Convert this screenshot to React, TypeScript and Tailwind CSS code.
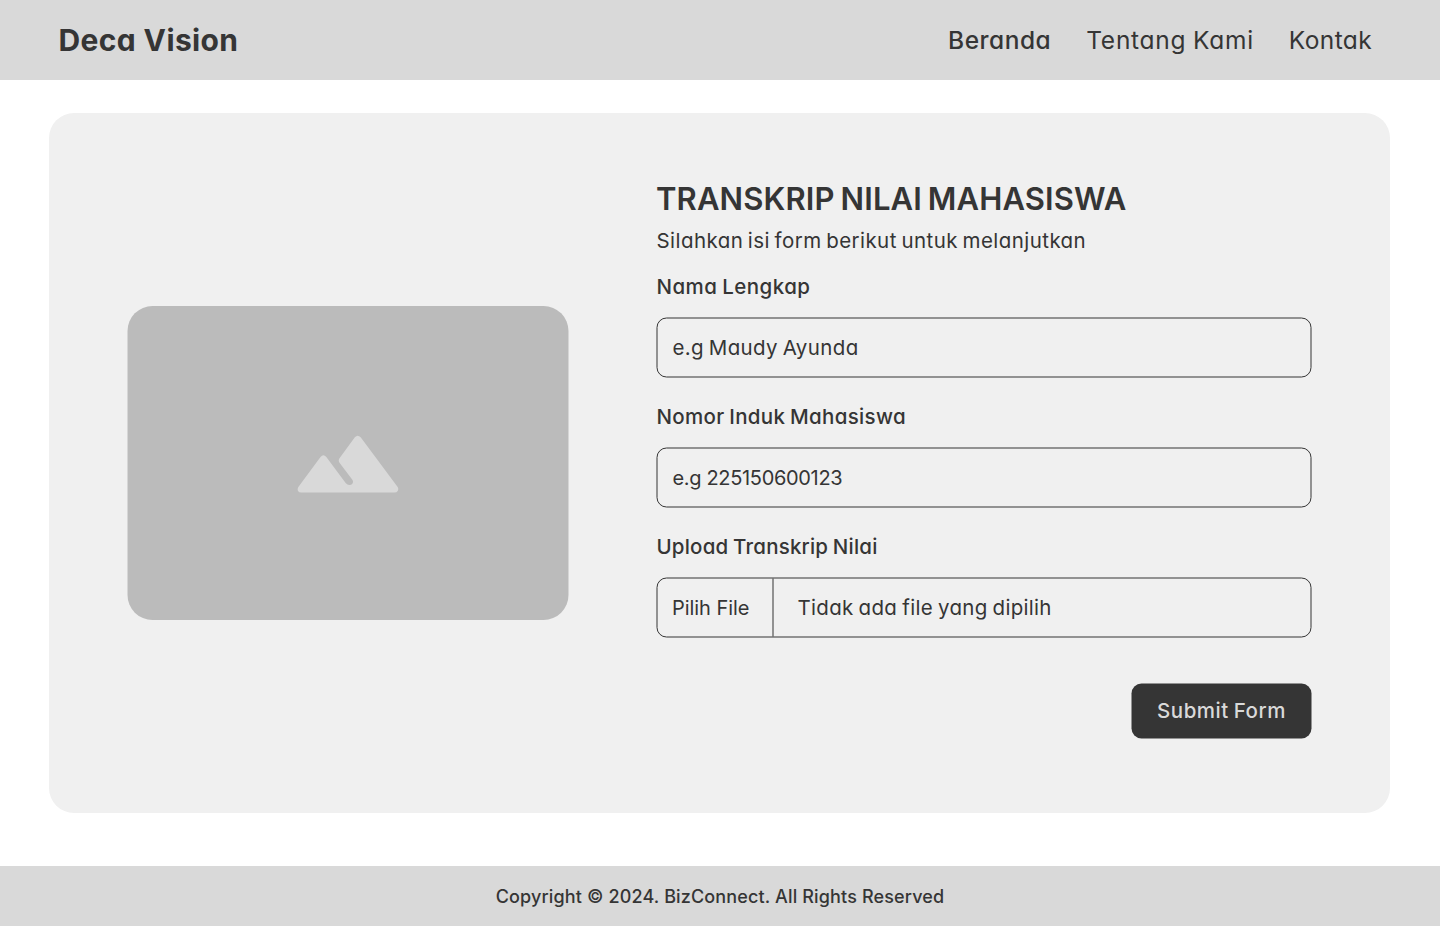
import type { ReactNode } from "react";

function Navbar() {
  return (
    <header className="flex h-20 shrink-0 items-center justify-between bg-[#d9d9d9] pl-[58.5px] pr-[68px]">
      <span className="text-[30px] font-bold tracking-[0.38px]">Deca Vision</span>
      <nav className="flex items-center gap-[35px] pt-px text-[24.5px]">
        <a className="font-medium tracking-[0.5px]">Beranda</a>
        <a className="tracking-[0.74px] [word-spacing:-1px]">Tentang Kami</a>
        <a className="tracking-[0.38px]">Kontak</a>
      </nav>
    </header>
  );
}

function ImagePlaceholder() {
  return (
    <div className="flex h-[314px] w-[441px] shrink-0 translate-x-[0.5px] items-center justify-center rounded-[25px] bg-[#bbbbbb]">
      <svg viewBox="51 45 306 174" className="h-[58px] w-[102px] -translate-x-[0.5px] translate-y-[1px]" fill="#d9d9d9">
        <path d="M55 201 L121.500 111 Q130 101 139 111 L197 189 Q202 195 208 195 Q214 195 217 191 Q221 185 217 179 L178.500 128 Q174 121.500 178.500 115 L224.500 52 Q233 43 242 52 L353 201 Q356.500 207 353 213 Q350 217.500 344 217.500 H64 Q57 217.500 54 213 Q51.500 207 55 201 Z" />
      </svg>
    </div>
  );
}

function Field({ label, children }: { label: ReactNode; children: ReactNode }) {
  return (
    <div className="flex flex-col">
      <div className="mb-[15px] h-[30px] pl-[0.5px] text-[20.5px] font-medium leading-[30px] [word-spacing:-1px]">
        {label}
      </div>
      <div className="flex h-[60px] translate-x-[0.5px] translate-y-[0.5px] items-center rounded-[10px] border border-[#353535]">
        {children}
      </div>
    </div>
  );
}

export default function App() {
  return (
    <div className="flex h-[926px] w-[1440px] flex-col overflow-hidden bg-white font-['Inter',sans-serif] text-[#353535] [font-feature-settings:'cv11']">
      <Navbar />
      <main className="flex-1 pl-[49px] pt-[33px]">
        <section className="flex h-[700px] w-[1341px] items-center rounded-[25px] bg-[#f0f0f0] pl-[78px]">
          <ImagePlaceholder />
          <form className="ml-[88px] flex h-full w-[655px] flex-col pt-[66px] text-xl">
            <h1 className="h-10 whitespace-nowrap text-[31px] font-semibold leading-10 tracking-[0.12px] [word-spacing:-2px]">
              TRANSKRIP NILAI MAHASISWA
            </h1>
            <p className="mb-4 mt-[7px] pl-[0.5px] text-[20.5px] leading-[30px] tracking-[0.44px] [word-spacing:-1.6px]">
              Silahkan isi form berikut untuk melanjutkan
            </p>
            <div className="flex flex-col gap-[25px]">
              <Field label={<span className="tracking-[0.45px]">Nama Lengkap</span>}>
                <span className="pl-[15px] text-[20.5px] tracking-[0.37px] [word-spacing:-1.4px]">e.g Maudy Ayunda</span>
              </Field>
              <Field label={<span className="tracking-[0.32px]">Nomor Induk Mahasiswa</span>}>
                <span className="pb-px pl-[15px] tracking-[-0.33px]">e.g 225150600123</span>
              </Field>
              <Field label={<span className="tracking-[0.2px]">Upload Transkrip Nilai</span>}>
                <span className="flex h-full w-[116px] items-center border-r border-[#353535] pb-px pl-[14.5px] tracking-[-0.05px]">
                  Pilih File
                </span>
                <span className="pl-6 text-[20.5px] tracking-[0.3px] [word-spacing:-1px]">Tidak ada file yang dipilih</span>
              </Field>
            </div>
            <button
              type="button"
              className="mt-[46px] h-[55px] w-[180px] translate-x-[0.5px] translate-y-[0.5px] self-end rounded-[10px] bg-[#353535] text-[20.5px] font-medium tracking-[0.52px] text-[#d9d9d9] [word-spacing:-1px]"
            >
              Submit Form
            </button>
          </form>
        </section>
      </main>
      <footer className="flex h-[60px] shrink-0 items-center justify-center bg-[#d9d9d9] pt-0.5 text-lg font-medium tracking-[0.14px]">
        Copyright © 2024. BizConnect. All Rights Reserved
      </footer>
    </div>
  );
}
